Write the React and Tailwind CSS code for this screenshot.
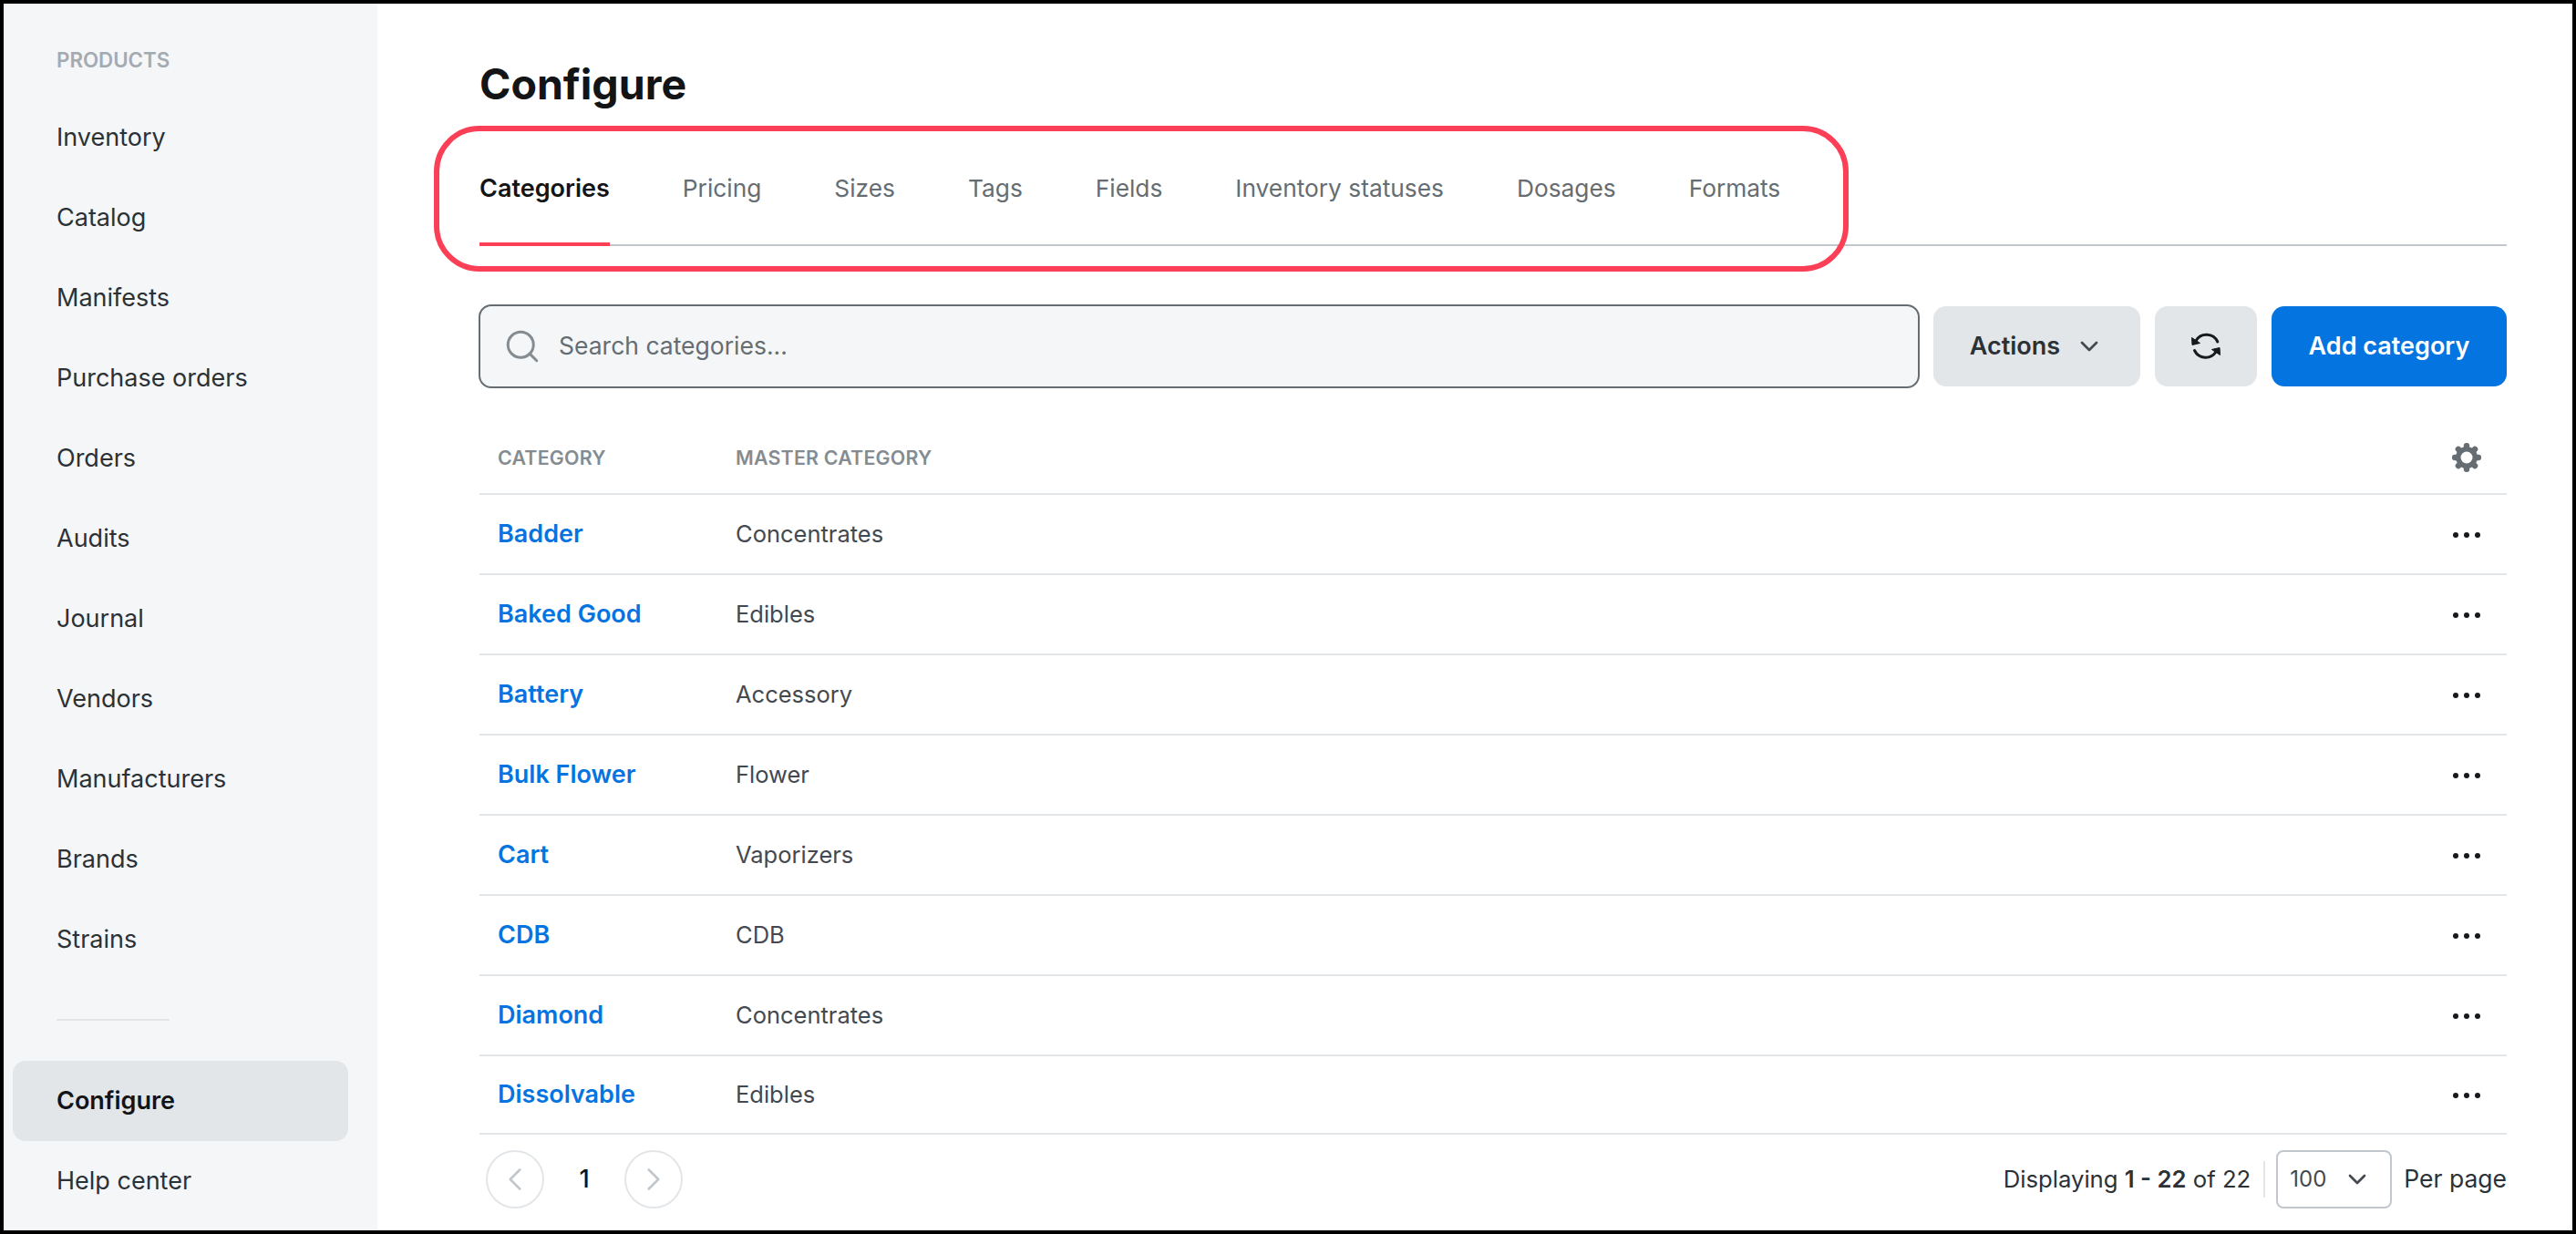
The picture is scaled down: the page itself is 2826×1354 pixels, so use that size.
import { Search, ChevronDown, ChevronLeft, ChevronRight } from 'lucide-react';

const font = { fontFamily: 'Inter' };

const navItems = ['Inventory', 'Catalog', 'Manifests', 'Purchase orders', 'Orders', 'Audits', 'Journal', 'Vendors', 'Manufacturers', 'Brands', 'Strains'];

const tabs = ['Categories', 'Pricing', 'Sizes', 'Tags', 'Fields', 'Inventory statuses', 'Dosages', 'Formats'];

const rows = [
  ['Badder', 'Concentrates'],
  ['Baked Good', 'Edibles'],
  ['Battery', 'Accessory'],
  ['Bulk Flower', 'Flower'],
  ['Cart', 'Vaporizers'],
  ['CDB', 'CDB'],
  ['Diamond', 'Concentrates'],
  ['Dissolvable', 'Edibles'],
];

function RefreshIcon() {
  return (
    <svg viewBox="0 0 32 32" className="w-8 h-8" fill="none">
      <path d="M28.8 11A13.5 13.5 0 0 0 5 10" stroke="#17191c" strokeWidth="3" strokeLinecap="round" />
      <path d="M3.5 20.5A13.5 13.5 0 0 0 27 22" stroke="#17191c" strokeWidth="3" strokeLinecap="round" />
      <path d="M0.5 6.5L1 14.5L9.5 12.5Z" fill="#17191c" stroke="#17191c" strokeLinejoin="round" />
      <path d="M31.5 25.5L31 17.5L22.5 19.5Z" fill="#17191c" stroke="#17191c" strokeLinejoin="round" />
    </svg>
  );
}

function GearIcon() {
  return (
    <svg viewBox="0 0 32 32" className="w-8 h-8" fill="#656d73">
      <circle cx="16" cy="16" r="12" />
      {[0, 45, 90, 135, 180, 225, 270, 315].map(a => (
        <rect key={a} x="12.8" y="0" width="6.4" height="9" rx="3" transform={`rotate(${a} 16 16)`} />
      ))}
      <circle cx="16" cy="16" r="6.5" fill="#ffffff" />
    </svg>
  );
}

function Dots() {
  return (
    <div className="flex items-center gap-[6px]">
      <span className="w-[6px] h-[6px] rounded-full bg-[#17191c]" />
      <span className="w-[6px] h-[6px] rounded-full bg-[#17191c]" />
      <span className="w-[6px] h-[6px] rounded-full bg-[#17191c]" />
    </div>
  );
}

export default function App() {
  return (
    <div className="relative w-[2826px] h-[1354px] box-border border-4 border-black bg-white flex overflow-hidden" style={font}>
      {/* Sidebar */}
      <div className="w-[410px] bg-[#f4f6f8] flex flex-col shrink-0">
        <div className="pl-[58px] h-[62px] pt-[48px] leading-[28px] text-[22.3px] font-semibold text-[#a3abb0]">PRODUCTS</div>
        <div className="flex flex-col mt-[41px]">
          {navItems.map(item => (
            <div key={item} className="h-[88px] pl-[58px] flex items-center text-[27px] text-[#2c3136]">{item}</div>
          ))}
        </div>
        <div className="ml-[58px] w-[124px] h-[2px] bg-[#e3e6e9] mt-[43px]" />
        <div className="ml-[10px] w-[368px] mt-[44px] h-[88px] rounded-[14px] bg-[#e3e6e9] pl-[48px] flex items-center text-[27px] font-semibold text-[#121416]">Configure</div>
        <div className="h-[88px] pl-[58px] flex items-center text-[27px] text-[#2c3136]">Help center</div>
      </div>

      {/* Main */}
      <div className="flex-1 pl-[112px] pr-[72px] flex flex-col">
        <h1 className="text-[46.5px] leading-[56px] font-bold text-[#121416] mt-[60px]">Configure</h1>
        <div className="flex gap-[80px] box-border border-b-2 border-[#c1c7cc] h-[150px] items-stretch">
          {tabs.map((t, i) => (
            <div key={t} className={i === 0
              ? 'flex items-center text-[27px] font-semibold text-[#121416] border-b-4 border-[#fb3f56] -mb-[2px] pt-[28px]'
              : 'flex items-center text-[26.3px] text-[#656d73] pt-[26px]'}>{t}</div>
          ))}
        </div>

        <div className="flex items-center gap-[15px] mt-[64px] -ml-[1px] h-[92px] shrink-0">
          <div className="flex-1 h-[92px] box-border border-2 border-[#656d73] rounded-[14px] bg-[#f4f6f8] flex items-center pl-[25px] gap-[19px]">
            <Search className="w-[42px] h-[42px] text-[#848c91]" strokeWidth={1.7} />
            <span className="text-[26.5px] text-[#656d73]">Search categories...</span>
          </div>
          <div className="w-[227px] h-[88px] rounded-[14px] bg-[#e3e6e9] flex items-center justify-center gap-[16px] text-[27px] font-semibold text-[#2c3136]">
            Actions
            <ChevronDown className="w-[32px] h-[32px] text-[#43494f]" strokeWidth={2} />
          </div>
          <div className="w-[112px] h-[88px] rounded-[14px] bg-[#e3e6e9] flex items-center justify-center ml-[1px]">
            <RefreshIcon />
          </div>
          <div className="w-[258px] h-[88px] rounded-[14px] bg-[#0474e0] flex items-center justify-center text-[27px] font-semibold text-white ml-[1px]">Add category</div>
        </div>

        <div className="flex items-center box-border h-[117px] pt-[37px] border-b-2 border-[#e3e6e9] shrink-0">
          <div className="w-[281px] pl-[20px] text-[21.4px] font-semibold text-[#848c91] tracking-[0.2px]">CATEGORY</div>
          <div className="flex-1 text-[21.4px] font-semibold text-[#848c91] tracking-[0.2px]">MASTER CATEGORY</div>
          <div className="w-[88px] flex justify-center -mt-[1px]"><GearIcon /></div>
        </div>
        {rows.map(([name, master], i) => (
          <div key={name} className={i === rows.length - 1 ? 'flex items-center box-border h-[86px] border-b-2 border-[#e3e6e9] shrink-0 pt-[1px]' : 'flex items-center box-border h-[88px] border-b-2 border-[#e3e6e9] shrink-0 pt-[1px]'}>
            <div className="w-[281px] pl-[20px] text-[27px] font-semibold text-[#0474e0]">{name}</div>
            <div className="flex-1 text-[25.5px] text-[#43494f]">{master}</div>
            <div className="w-[88px] flex justify-center"><Dots /></div>
          </div>
        ))}

        <div className="flex items-center justify-between mt-[17px]">
          <div className="flex items-center pl-[7px]">
            <div className="w-[64px] h-[64px] rounded-full border-2 border-[#e3e6e9] flex items-center justify-center">
              <ChevronLeft className="w-[42px] h-[42px] text-[#c1c7cc]" strokeWidth={1.5} />
            </div>
            <div className="w-[88px] text-center text-[27px] font-medium text-[#121416]">1</div>
            <div className="w-[64px] h-[64px] rounded-full border-2 border-[#e3e6e9] flex items-center justify-center">
              <ChevronRight className="w-[42px] h-[42px] text-[#c1c7cc]" strokeWidth={1.5} />
            </div>
          </div>
          <div className="flex items-center text-[26.5px] text-[#2c3136]">
            <span className="text-[25.7px]">Displaying <b className="font-semibold">1 - 22</b> of 22</span>
            <div className="w-[2px] h-[40px] bg-[#e3e6e9] ml-[14px] mr-[12px]" />
            <div className="w-[127px] h-[64px] box-border border-2 border-[#c1c7cc] rounded-[8px] flex items-center justify-between pl-[13px] pr-[20px] text-[24px] text-[#43494f]">
              100
              <ChevronDown className="w-[32px] h-[32px] text-[#43494f]" strokeWidth={2} />
            </div>
            <span className="ml-[13px]">Per page</span>
          </div>
        </div>
      </div>

      {/* Red annotation around the tabs */}
      <div className="absolute left-[472px] top-[134px] w-[1552px] h-[160px] box-border border-[6px] border-[#fb3f56] rounded-[50px]" />
    </div>
  );
}
